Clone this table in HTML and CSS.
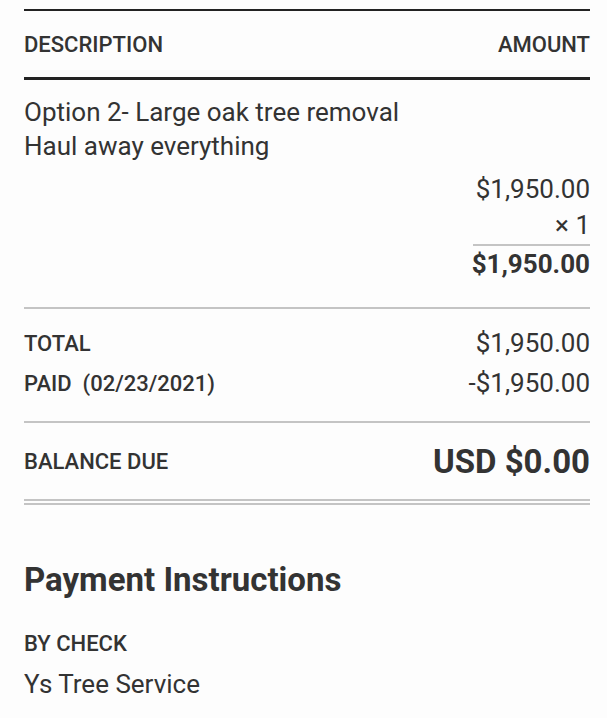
FILE: index.html
```html
<!DOCTYPE html>
<html>
<head>
<meta charset="utf-8">
<link rel="stylesheet" href="styles.css">
</head>
<body>
<div class="invoice">
  <div class="thead">
    <span>DESCRIPTION</span>
    <span>AMOUNT</span>
  </div>
  <div class="item">
    <div class="desc">
      <div>Option 2- Large oak tree removal</div>
      <div>Haul away everything</div>
    </div>
    <div class="calc">
      <div class="price">$1,950.00</div>
      <div class="qty">× 1</div>
      <div class="line-total">$1,950.00</div>
    </div>
  </div>
  <div class="totals">
    <div class="trow"><span class="label">TOTAL</span><span class="val">$1,950.00</span></div>
    <div class="trow"><span class="label">PAID&nbsp; (02/23/2021)</span><span class="val">-$1,950.00</span></div>
  </div>
  <div class="balance">
    <span class="label">BALANCE DUE</span>
    <span class="big">USD $0.00</span>
  </div>
  <div class="instructions">
    <h2>Payment Instructions</h2>
    <div class="method">BY CHECK</div>
    <div class="payee">Ys Tree Service</div>
  </div>
</div>
</body>
</html>
```
FILE: styles.css
```css
html, body {
  margin: 0;
  padding: 0;
  background: #fdfdfd;
}
body {
  font-family: Roboto, "Noto Sans", sans-serif;
  color: #333;
}
.invoice {
  padding: 9px 17px 0 24px;
}
.thead {
  display: flex;
  justify-content: space-between;
  align-items: center;
  height: 66px;
  border-top: 2px solid #222;
  border-bottom: 3px solid #222;
  font-size: 22px;
  font-weight: 500;
}
.item {
  padding-top: 15px;
  padding-bottom: 25px;
  border-bottom: 2px solid #c4c4c4;
  font-size: 26px;
}
.desc {
  line-height: 34px;
}
.calc {
  margin-top: 8px;
  display: flex;
  flex-direction: column;
  align-items: flex-end;
}
.price {
  line-height: 36px;
}
.qty {
  line-height: 37px;
  width: 117px;
  text-align: right;
  border-bottom: 2px solid #c4c4c4;
}
.line-total {
  line-height: 36px;
  font-weight: 700;
}
.totals {
  padding: 14px 0 18px;
  border-bottom: 2px solid #c4c4c4;
}
.trow {
  display: flex;
  justify-content: space-between;
  align-items: center;
  height: 40px;
}
.label {
  font-size: 22px;
  font-weight: 500;
}
.val {
  font-size: 26px;
}
.balance {
  display: flex;
  justify-content: space-between;
  align-items: center;
  height: 76px;
  border-bottom: 6px double #c4c4c4;
}
.big {
  font-size: 33px;
  font-weight: 700;
}
.instructions h2 {
  margin: 0;
  padding-top: 55px;
  font-size: 33px;
  font-weight: 700;
  line-height: 40px;
}
.method {
  margin-top: 24px;
  font-size: 22px;
  font-weight: 500;
  line-height: 40px;
}
.payee {
  font-size: 26px;
  line-height: 40px;
}
```
